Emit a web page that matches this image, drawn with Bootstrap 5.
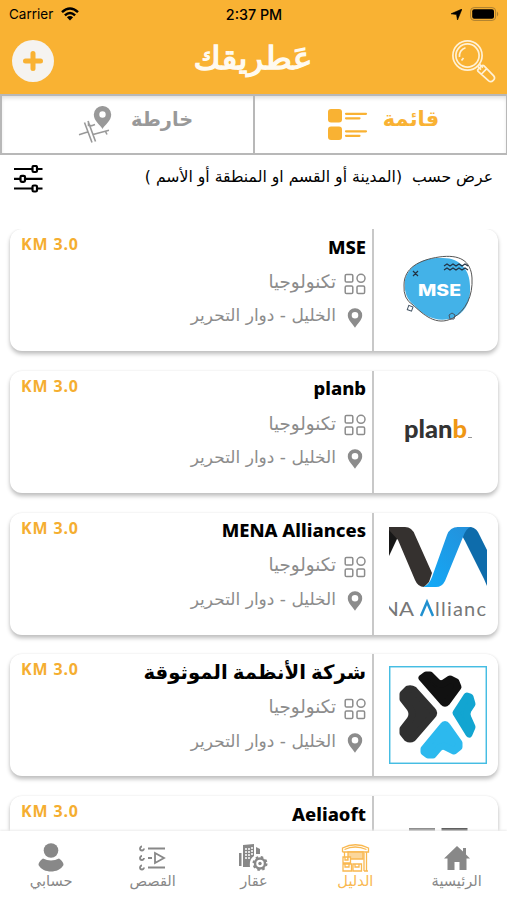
<!DOCTYPE html>
<html lang="ar">
<head>
<meta charset="utf-8">
<meta name="viewport" content="width=device-width, initial-scale=1">
<title>عطريقك</title>
<link href="https://cdn.jsdelivr.net/npm/bootstrap@5.3.0/dist/css/bootstrap.min.css" rel="stylesheet">
<style>
body{font-family:"Noto Sans","DejaVu Sans",sans-serif;background:#fff;color:#000}
svg{display:block;flex:none}
.app{height:900px;width:507px}
.topbar{height:94px;background:#f9b233}
.statusbar{height:28px;font:400 13.5px Inter,"Liberation Sans",sans-serif;padding:0 8px 0 9px}
.statusbar .side{flex:1}
.statusbar .clock{font-weight:500;font-size:14.3px}
.titlebar{height:66px;padding:0 11px 0 12px}
.ar{font-family:"DejaVu Sans",sans-serif;direction:rtl;white-space:nowrap;line-height:1}
.addbtn{width:42px;height:42px;background:#f5f3f0}
.tabs{height:61px;border:2px solid #b8b8b8;border-right-width:1px;box-shadow:inset 0 3px 4px -1px #ddd}
.tabs>div{color:#999}
.tabs>div:first-child{border-right:2px solid #b8b8b8;flex:0 0 253px;padding:10px 0 0 16px;gap:19px}
.tabs>.on{color:#f9b233;padding:10px 0 0 5px;gap:15px}
.tabs .ar{font-weight:700;font-size:19.3px;padding-top:4px}
.tabs .on .ar{font-size:21px;padding-top:3px}
.filter{height:74px;padding:10px 14px 0 14px}
.filter .ar{font-size:15.68px;padding-top:4px}
.listing{padding:0 9px 0 10px;gap:19.8px;min-height:0}
.place{height:122px;border-radius:12px;box-shadow:0 3px 4px #bdbdbd,0 0 2px #e8e8e8;background:#fff;flex:none}
.thumb{width:126px;border-left:2px solid #c8c8c8;padding-left:4px}
.km{color:#f5ae30;font-weight:700;font-size:16px;letter-spacing:.85px;line-height:20px;padding:5px 0 0 11px}
.info{padding:0 6px 0 0}
.ttl{font-weight:800;font-size:18.4px;line-height:24px;height:24px;margin-top:5.5px;white-space:nowrap}
.ttl[dir]{font-size:19.7px}
.meta{color:#8c8c8c;height:34px;gap:8px}
.meta .ar{font-size:17.05px;padding-bottom:3px}
.meta .kind{font-size:18.3px}
.bottombar{height:69px;background:#fff;box-shadow:0 -1px 2px #ececec;z-index:2;color:#888}
.bottombar>div{width:101.4px;padding:12px 0 0 1px}
.bottombar .ar{font-size:14.6px;margin-top:2px}
.bottombar .on{color:#f9b850}
</style>
<script src="https://cdn.jsdelivr.net/npm/bootstrap@5.3.0/dist/js/bootstrap.bundle.min.js"></script>
</head>
<body>
<svg width="0" height="0" class="position-absolute">
<symbol id="cat" viewBox="0 0 22 22"><g fill="none" stroke="#8c8c8c" stroke-width="1.5"><rect x="1.2" y="1.5" width="7.6" height="7.6" rx="1.3"/><circle cx="17" cy="5.3" r="4"/><rect x="1.2" y="13" width="7.6" height="7.6" rx="1.3"/><rect x="13" y="13" width="7.6" height="7.6" rx="1.3"/></g></symbol>
<symbol id="pin" viewBox="0 0 16 20"><path fill="#8c8c8c" fill-rule="evenodd" d="M8 .3A7 7 0 0 0 .8 7.4C.8 12 6 16 8 19.800c2-3.800 7.200-7.800 7.200-12.400A7 7 0 0 0 8 .3zM8 4a3.300 3.300 0 1 1 0 6.600A3.300 3.300 0 0 1 8 4z"/></symbol>
</svg>
<div class="app d-flex flex-column overflow-hidden">
<header class="topbar flex-shrink-0">
 <div class="statusbar d-flex align-items-center">
  <div class="side d-flex align-items-center gap-2"><span>Carrier</span>
   <svg width="18" height="14" viewBox="0 0 18 14"><g fill="none" stroke="#000" stroke-width="2.500"><path d="M1 5.200Q9-2.200 17 5.200"/><path d="M3.900 8.300Q9 3.600 14.100 8.300"/></g><path d="M9 13.500L5.900 10.300Q9 7.700 12.100 10.300z"/></svg></div>
  <span class="clock">2:37 PM</span>
  <div class="side d-flex align-items-center justify-content-end gap-2">
   <svg width="11" height="11" viewBox="0 0 11 11"><path d="M11 0L6.500 11L5.500 5.500L0 4.800z" stroke="#000" stroke-width=".6"/></svg>
   <svg width="29" height="14" viewBox="0 0 29 14"><rect x=".6" y=".6" width="25" height="12.800" rx="3.500" fill="none" stroke="#ab7f31"/><rect x="2.200" y="2.200" width="21.800" height="9.600" rx="2"/><path d="M27 4.500q2.500 2.500 0 5z" fill="#ab7f31"/></svg>
  </div>
 </div>
 <div class="titlebar d-flex align-items-center justify-content-between">
  <div class="addbtn rounded-circle d-flex align-items-center justify-content-center"><svg width="20" height="20" viewBox="0 0 20 20"><path d="M10 2.500v15M2.500 10h15" stroke="#f9b233" stroke-width="5" stroke-linecap="round"/></svg></div>
  <svg width="134" height="60" viewBox="0 0 134 60"><text x="67" y="38" text-anchor="middle" direction="rtl" textLength="119" lengthAdjust="spacingAndGlyphs" font-family="DejaVu Sans" font-size="31" fill="#fffaf0" stroke="#fffaf0" stroke-width="1.300">عَطريقك</text></svg>
  <svg width="45" height="45" viewBox="0 0 45 45" fill="none" stroke="#fff1d6" stroke-width="1.700"><circle cx="16.500" cy="16.500" r="14.600"/><circle cx="16.500" cy="16.500" r="11.600"/><path d="M8.500 18a8.300 8.300 0 0 1 6-9.300M10.500 21.500l2-2.500M26.500 27.200l3.500 3.500M28.500 25.500l3.500 3"/><path d="M27 30.500l3.800-3.800q1.200-.8 2.300.2l9.600 10c2.500 3-2 7.300-5 5l-10.300-9.300q-1.200-1-.4-2.100zM30.500 35l4.800-4.800"/></svg>
 </div>
</header>
<nav class="tabs d-flex flex-shrink-0">
 <div class="d-flex justify-content-center">
  <svg width="34" height="40" viewBox="0 0 34 40"><path fill="#999" fill-rule="evenodd" d="M24.500 0a8.500 8.500 0 0 0-8.700 8.500C15.800 15 22 18.500 24.500 23c2.500-4.500 8.700-8 8.700-14.500A8.500 8.500 0 0 0 24.500 0zm0 5.300a3.200 3.200 0 1 1 0 6.400 3.200 3.200 0 0 1 0-6.400z"/><g stroke="#999" stroke-width="1.600" fill="none"><path d="M1 28.800l8.500-2.700M6.500 16.500l7.500 20M10 15l7.500 20.500M13 20l4-1.500M10.500 15.500v4h3M15 28.500l16-4.200M27.500 25.500l1.500 3"/></g></svg>
  <span class="ar">خارطة</span>
 </div>
 <div class="on d-flex justify-content-center flex-fill">
  <svg width="41" height="36" viewBox="0 0 41 36" style="margin-top:2px"><g fill="#f9b233"><rect x="1" y="1" width="14" height="13.500" rx="3"/><rect x="1" y="18.500" width="14" height="13.500" rx="3"/></g><path d="M19 5.800h20M19 10.300h13.500M19 23.300h20M19 27.800h13.500" stroke="#f9b233" stroke-width="2.200" stroke-linecap="round"/></svg>
  <span class="ar">قائمة</span>
 </div>
</nav>
<div class="filter d-flex justify-content-between flex-shrink-0">
 <svg width="29" height="28" viewBox="0 0 29 28" stroke="#000" stroke-width="2.200" fill="#fff"><path d="M0 4h28.500M0 13.800h28.500M0 23.500h28.500"/><rect x="18.500" y="1" width="4.500" height="6" rx="1.300"/><rect x="6.500" y="10.800" width="4.500" height="6" rx="1.300"/><rect x="18.500" y="20.500" width="4.500" height="6" rx="1.300"/></svg>
 <span class="ar">عرض حسب &nbsp;(المدينة أو القسم او المنطقة أو الأسم )</span>
</div>
<main class="listing d-flex flex-column flex-fill overflow-hidden">
 <article class="place d-flex">
  <div class="km">KM 3.0</div>
  <div class="info d-flex flex-column align-items-end flex-fill"><div class="ttl">MSE</div>
   <div class="meta d-flex align-items-center mt-2"><span class="ar kind">تكنولوجيا</span><svg width="22" height="22"><use href="#cat"/></svg></div>
   <div class="meta d-flex align-items-center"><span class="ar">الخليل - دوار التحرير</span><svg width="22" height="20"><use href="#pin"/></svg></div></div>
  <div class="thumb d-flex align-items-center justify-content-center"><svg width="74" height="70" viewBox="0 0 74 70"><path fill="#43b2e8" d="M4 25C8 9 24 2 42 3c18 0 27 13 27 28 1 16-5 29-21 33-14 3-27-4-35-14Q2 42 4 25z"/><path fill="none" stroke="#555" d="M3 30C3 13 18 5 38 2c21-3 32 4 33 21 1 18-6 32-19 40-17 9-30-4-40-13Q2 44 3 30z"/><path fill="none" stroke="#234" stroke-width="1.200" d="M43 11l3-2 3 2 3-2 3 2 3-2 3 2 3-2 3 2M43 15l3-2 3 2 3-2 3 2 3-2 3 2 3-2 3 2M12 16l5 5M17 16l-5 5"/><g fill="#fff" stroke="#456"><rect x="7" y="51" width="4.500" height="4.500" transform="rotate(20 9 53)"/><path d="M51 58l3 2-1 4h-4l-1-4z" fill="none"/></g><text x="17" y="41" textLength="43" lengthAdjust="spacingAndGlyphs" font-family="Inter" font-weight="800" font-size="16.500" fill="#fff">MSE</text></svg></div>
 </article>
 <article class="place d-flex">
  <div class="km">KM 3.0</div>
  <div class="info d-flex flex-column align-items-end flex-fill"><div class="ttl">planb</div>
   <div class="meta d-flex align-items-center mt-2"><span class="ar kind">تكنولوجيا</span><svg width="22" height="22"><use href="#cat"/></svg></div>
   <div class="meta d-flex align-items-center"><span class="ar">الخليل - دوار التحرير</span><svg width="22" height="20"><use href="#pin"/></svg></div></div>
  <div class="thumb d-flex align-items-center justify-content-center"><svg width="70" height="34" viewBox="0 0 70 34"><text x="1" y="23" textLength="63" lengthAdjust="spacingAndGlyphs" font-family="Lato" font-weight="900" font-size="24" fill="#333">plan<tspan fill="#ef9714">b</tspan></text><path d="M65 22.500h4" stroke="#999"/></svg></div>
 </article>
 <article class="place d-flex">
  <div class="km">KM 3.0</div>
  <div class="info d-flex flex-column align-items-end flex-fill"><div class="ttl">MENA Alliances</div>
   <div class="meta d-flex align-items-center mt-2"><span class="ar kind">تكنولوجيا</span><svg width="22" height="22"><use href="#cat"/></svg></div>
   <div class="meta d-flex align-items-center"><span class="ar">الخليل - دوار التحرير</span><svg width="22" height="20"><use href="#pin"/></svg></div></div>
  <div class="thumb d-flex align-items-center justify-content-center"><svg width="98" height="98" viewBox="0 0 98 98"><defs><linearGradient id="bl" x1="0" y1="1" x2="1" y2="0"><stop offset="0" stop-color="#12aaf8"/><stop offset="1" stop-color="#2590da"/></linearGradient></defs><path d="M0 2h12L8 14 0 31z" fill="#171717"/><path d="M0 2h16q7 0 10 8l17 38-3 9-5 5q-6 0-9-7L9 15 0 5z" fill="#35312f"/><path d="M68 2h14q6 1 9 9l7 14v36l-3-7-19-38z" fill="#0e6cab"/><path d="M34 62q6-2 9-10L58 10q3-8 11-8h13q-5 1-8 10L56 56q-3 6-9 6z" fill="url(#bl)"/><g font-family="Lato" font-size="20" fill="#777"><text x="-7" y="91" textLength="32" lengthAdjust="spacingAndGlyphs">NA</text><text x="46" y="91" textLength="51" lengthAdjust="spacing">llianc</text></g><path d="M32 91l6-14 6 14" fill="none" stroke="#2090cf" stroke-width="2.500"/></svg></div>
 </article>
 <article class="place d-flex">
  <div class="km">KM 3.0</div>
  <div class="info d-flex flex-column align-items-end flex-fill"><div class="ttl" dir="rtl">شركة الأنظمة الموثوقة</div>
   <div class="meta d-flex align-items-center mt-2"><span class="ar kind">تكنولوجيا</span><svg width="22" height="22"><use href="#cat"/></svg></div>
   <div class="meta d-flex align-items-center"><span class="ar">الخليل - دوار التحرير</span><svg width="22" height="20"><use href="#pin"/></svg></div></div>
  <div class="thumb d-flex align-items-center justify-content-center"><svg width="98" height="98" viewBox="0 0 98 98"><rect x=".7" y=".7" width="96.600" height="96.600" fill="none" stroke="#45bde3" stroke-width="1.500"/><g stroke-linejoin="round" stroke-width="7"><path fill="#111" stroke="#111" d="M33 12l4-3h4l7 7q3 3 7 1l6-4 6 3 2 5L58 36q-2 2-4 0z"/><path fill="#303030" stroke="#303030" d="M14 28l5-5q3-1 6 1L43 44q3 3 0 6L24 72q-3 2-6 0l-4-5v-4l7-9q4-6 0-12l-7-9z"/><path fill="#12a5d1" stroke="#12a5d1" d="M67 47L78 30l3 1 2 7-4 6q-2 4 0 8l4 9-3 7z"/><path fill="#2cb9ee" stroke="#2cb9ee" d="M54 60L35 83v3l4 3h5l6-7q3-3 7-1l8 4 5-4v-4L58 60q-2-3-4 0z"/></g></svg></div>
 </article>
 <article class="place d-flex">
  <div class="km">KM 3.0</div>
  <div class="info d-flex flex-column align-items-end flex-fill"><div class="ttl">Aeliaoft</div></div>
  <div class="thumb d-flex justify-content-center"><svg width="98" height="60" viewBox="0 0 98 60"><path d="M20 32h26v10H20z" fill="#888"/><path d="M52.500 32h26v10h-26z" fill="#555"/></svg></div>
 </article>
</main>
<footer class="bottombar d-flex flex-shrink-0">
 <div class="d-flex flex-column align-items-center"><svg width="28" height="29" viewBox="0 0 28 29"><g fill="#888"><circle cx="14" cy="7.500" r="7.300"/><path d="M6 15.500q8 4 16 0 4.500 3 4.500 6.500C24 26.500 19 28.500 14 28.500S4 26.500 1.500 22Q1.500 18.500 6 15.500z"/></g></svg><span class="ar">حسابي</span></div>
 <div class="d-flex flex-column align-items-center"><svg width="27" height="29" viewBox="0 0 27 29" fill="none" stroke="#888" stroke-width="1.800"><path d="M9 5.500h17M9 24.500h17M9 15h4M16 10l9 5-9 5z"/><path d="M3 3.500a2 2 0 1 0 2 2M3 13a2 2 0 1 0 2 2M3 22.500a2 2 0 1 0 2 2"/></svg><span class="ar">القصص</span></div>
 <div class="d-flex flex-column align-items-center"><svg width="29" height="29" viewBox="0 0 29 29"><path fill="#888" d="M0 10h2.500v13H0zM4 2l11-1v12q-5 3-4 11H4zM17 4l4 2v5h-4z"/><path stroke="#fff" stroke-width="1.500" stroke-dasharray="2 1" d="M7 5v12M10 5v12M13 4v8"/><circle cx="21" cy="20.500" r="5" fill="none" stroke="#888" stroke-width="2.500"/><circle cx="21" cy="20.500" r="6.500" fill="none" stroke="#888" stroke-width="2" stroke-dasharray="2.500 2.600"/><circle cx="21" cy="20.500" r="1.700" fill="#888"/></svg><span class="ar">عقار</span></div>
 <div class="on d-flex flex-column align-items-center"><svg width="29" height="29" viewBox="0 0 29 29" fill="none" stroke="#f9b850" stroke-width="1.300"><path d="M1.500 9V5Q14.500-1.500 27.500 5v4h-2v18.500M3.500 9v5M1.500 9h26M3.500 6.500Q14 1.500 25.500 6.500M23 28V10M23 28h4"/><path d="M7 9h15v7H7z" fill="#fbd79c"/><path d="M2 14h7.500v6H2zM2 21h8.500v7H2zM12 21h8.500v7H12zM4 14v3h3v-3M4 21v3h4v-3M14 21v3h4v-3" fill="#fff"/></svg><span class="ar">الدليل</span></div>
 <div class="d-flex flex-column align-items-center"><svg width="26" height="29" viewBox="0 0 26 29"><path fill="#888" d="M13 3L0 15.500h3.500V27h7v-8h5v8h7V15.500H26l-4-4V5h-3v3.500z"/></svg><span class="ar">الرئيسية</span></div>
</footer>
</div>
</body>
</html>
